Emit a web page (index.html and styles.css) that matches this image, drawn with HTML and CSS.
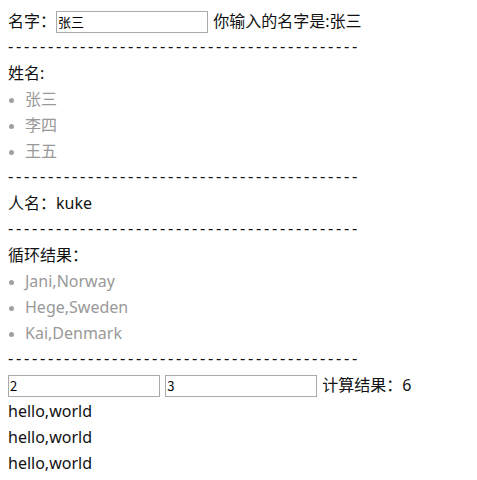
FILE: index.html
```html
<!DOCTYPE html>
<html lang="en">
<head>
    <meta charset="UTF-8">
    <title>Vue demo</title>
    <link rel="stylesheet" href="styles.css">
</head>
<body>
    <div class="row">名字：<input class="txt" type="text" value="张三"> 你输入的名字是:张三</div>
    <div class="line">--------------------------------------------</div>
    <div class="row">姓名:</div>
    <ul class="names">
        <li>张三</li>
        <li>李四</li>
        <li>王五</li>
    </ul>
    <div class="line">--------------------------------------------</div>
    <div class="row">人名：kuke</div>
    <div class="line">--------------------------------------------</div>
    <div class="row">循环结果：</div>
    <ul class="names">
        <li>Jani,Norway</li>
        <li>Hege,Sweden</li>
        <li>Kai,Denmark</li>
    </ul>
    <div class="line">--------------------------------------------</div>
    <div class="row"><input class="txt num" type="text" value="2"> <input class="txt num" type="text" value="3"> 计算结果：6</div>
    <div class="row">hello,world</div>
    <div class="row">hello,world</div>
    <div class="row">hello,world</div>
</body>
</html>
```

FILE: styles.css
```css
body{
    margin: 8px;
    font-family: "Noto Sans", "Noto Sans CJK SC", sans-serif;
    font-size: 16px;
    color: #111;
}

.row{
    height: 26px;
    line-height: 26px;
    white-space: nowrap;
}

.line{
    height: 26px;
    line-height: 26px;
    font-family: "Liberation Sans", sans-serif;
    letter-spacing: 2.67px;
    white-space: nowrap;
}

input.txt{
    box-sizing: border-box;
    width: 152px;
    height: 22px;
    margin: 0 1px 0 0;
    padding: 0 1px;
    border: 1px solid #a9a9a9;
    font-family: "Noto Sans CJK SC", sans-serif;
    font-size: 13px;
    color: #000;
    vertical-align: middle;
    position: relative;
    top: -1px;
}

ul.names{
    margin: 0;
    padding: 0;
    list-style: none;
    color: #999;
}

ul.names li{
    height: 26px;
    line-height: 26px;
}

ul.names li::before{
    content: "";
    display: inline-block;
    width: 5px;
    height: 5px;
    margin: 0 11px 0 1px;
    border-radius: 50%;
    background-color: #a0a0a0;
    vertical-align: middle;
}
```
